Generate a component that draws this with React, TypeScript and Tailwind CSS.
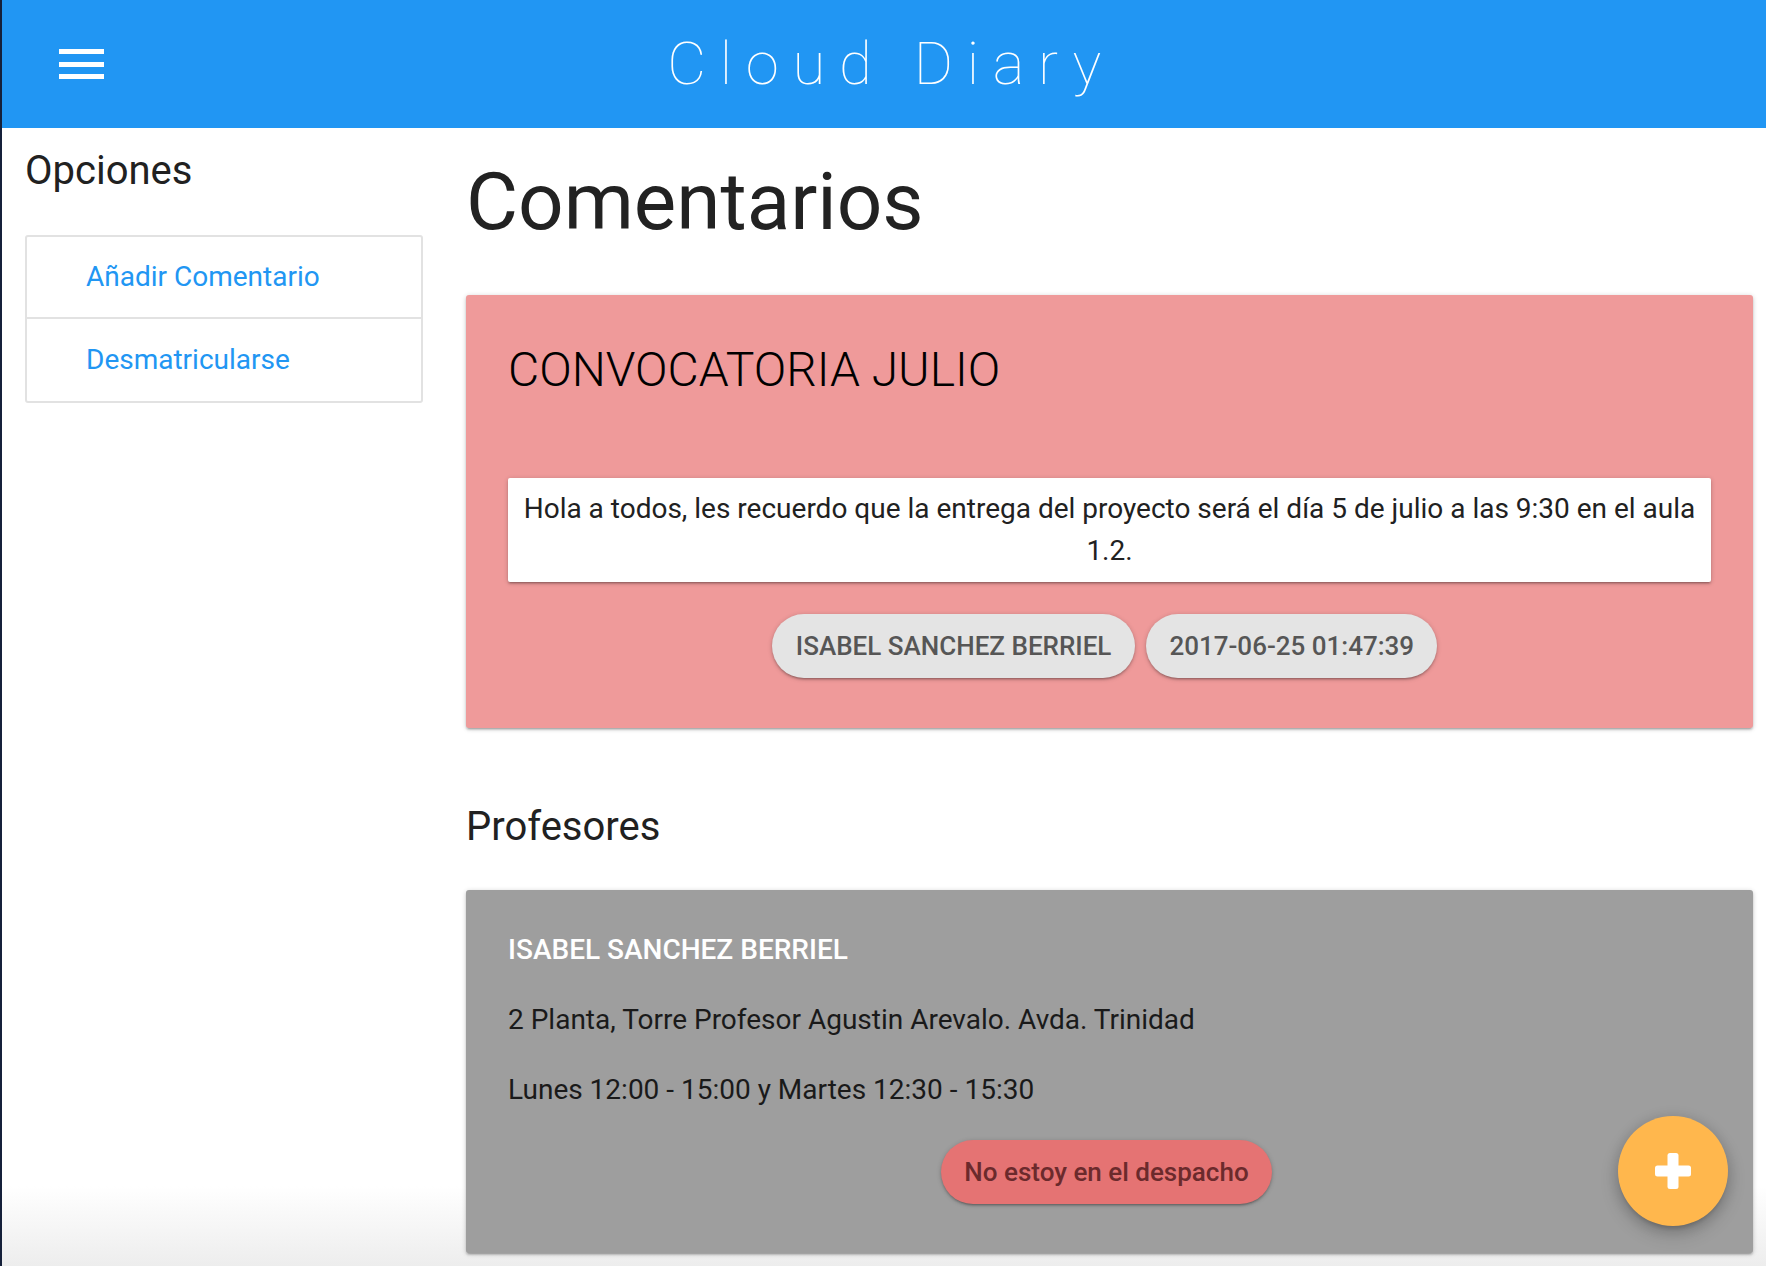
import React from "react";

const shadow1 =
  "shadow-[0_2px_2px_0_rgba(0,0,0,0.14),0_3px_1px_-2px_rgba(0,0,0,0.12),0_1px_5px_0_rgba(0,0,0,0.2)]";

const App = () => {
  return (
    <div className="flex min-h-screen font-['Roboto','Liberation_Sans',sans-serif]">
      {/* window edge */}
      <div className="w-[2px] shrink-0 bg-[#15203a]"></div>

      <div className="flex-1 min-h-screen bg-[linear-gradient(to_bottom,#ffffff_calc(100%-80px),#ededed_100%)]">
        <header className="grid h-[128px] grid-cols-[1fr_auto_1fr] items-center bg-[#2196f3]">
          <div className="pl-[57px]">
            <div className="flex w-[45px] flex-col gap-[7.5px]">
              <span className="block h-[5px] bg-white"></span>
              <span className="block h-[5px] bg-white"></span>
              <span className="block h-[5px] bg-white"></span>
            </div>
          </div>
          <h1 className="pl-[14px] text-[60px] leading-none font-thin tracking-[13.7px] text-white">
            Cloud Diary
          </h1>
          <div></div>
        </header>

        <div className="flex">
          {/* Sidebar */}
          <aside className="ml-[23px] w-[398px] shrink-0">
            <h4 className="mt-[19px] text-[40px] leading-[48px] text-[#212121]">Opciones</h4>
            <ul className="mt-[40px] rounded-[3px] border-2 border-[#e2e2e2]">
              <li className="flex h-[82px] items-center border-b-2 border-[#e2e2e2] pl-[59px] text-[28px] text-[#2196f3]">
                Añadir Comentario
              </li>
              <li className="flex h-[82px] items-center pl-[59px] text-[28px] text-[#2196f3]">
                Desmatricularse
              </li>
            </ul>
          </aside>

          {/* Main */}
          <main className="ml-[43px] w-[1287px]">
            <h2 className="mt-[26px] text-[80px] leading-[96px] text-[#222222]">Comentarios</h2>

            <div className={`mt-[45px] rounded-[3px] bg-[#ef9a9a] px-[42px] pt-[47px] pb-[50px] ${shadow1}`}>
              <h3 className="text-[48px] leading-[56px] font-light text-black">CONVOCATORIA JULIO</h3>
              <div className={`mt-[80px] rounded-[2px] bg-white px-[12px] py-[10px] text-center text-[28px] leading-[42px] text-[#212121] ${shadow1}`}>
                Hola a todos, les recuerdo que la entrega del proyecto será el día 5 de julio a las 9:30 en el aula 1.2.
              </div>
              <div className="mt-[32px] flex justify-center gap-[11px] pr-[10px]">
                <span className={`flex h-[64px] items-center rounded-full bg-[#e4e4e4] px-[24px] text-[26px] font-medium text-[#565656] ${shadow1}`}>
                  ISABEL SANCHEZ BERRIEL
                </span>
                <span className={`flex h-[64px] items-center rounded-full bg-[#e4e4e4] px-[23px] text-[26px] font-medium text-[#565656] ${shadow1}`}>
                  2017-06-25 01:47:39
                </span>
              </div>
            </div>

            <h4 className="mt-[75px] text-[40px] leading-[48px] text-[#212121]">Profesores</h4>

            <div className={`mt-[39px] rounded-[3px] bg-[#9e9e9e] px-[42px] pt-[43px] pb-[49px] ${shadow1}`}>
              <p className="text-[28px] leading-[34px] font-medium text-white">ISABEL SANCHEZ BERRIEL</p>
              <p className="mt-[36px] text-[28px] leading-[34px] text-[#1a1a1a]">
                2 Planta, Torre Profesor Agustin Arevalo. Avda. Trinidad
              </p>
              <p className="mt-[36px] text-[28px] leading-[34px] text-[#1a1a1a]">
                Lunes 12:00 - 15:00 y Martes 12:30 - 15:30
              </p>
              <div className="mt-[33px] flex justify-center pr-[6px]">
                <span className={`flex h-[64px] items-center rounded-full bg-[#e57373] px-[23px] text-[26px] font-medium text-[#6b2a2c] ${shadow1}`}>
                  No estoy en el despacho
                </span>
              </div>
            </div>
          </main>
        </div>
      </div>

      {/* floating action button */}
      <button className="fixed right-[38px] bottom-[40px] flex h-[110px] w-[110px] items-center justify-center rounded-full bg-[#ffb74d] shadow-[0_8px_17px_2px_rgba(0,0,0,0.14),0_3px_14px_2px_rgba(0,0,0,0.12),0_5px_5px_-3px_rgba(0,0,0,0.2)]">
        <svg width="36" height="36" viewBox="0 0 36 36">
          <rect x="12.5" y="0" width="11" height="36" rx="2.5" fill="white" />
          <rect x="0" y="12.5" width="36" height="11" rx="2.5" fill="white" />
        </svg>
      </button>
    </div>
  );
};

export default App;
